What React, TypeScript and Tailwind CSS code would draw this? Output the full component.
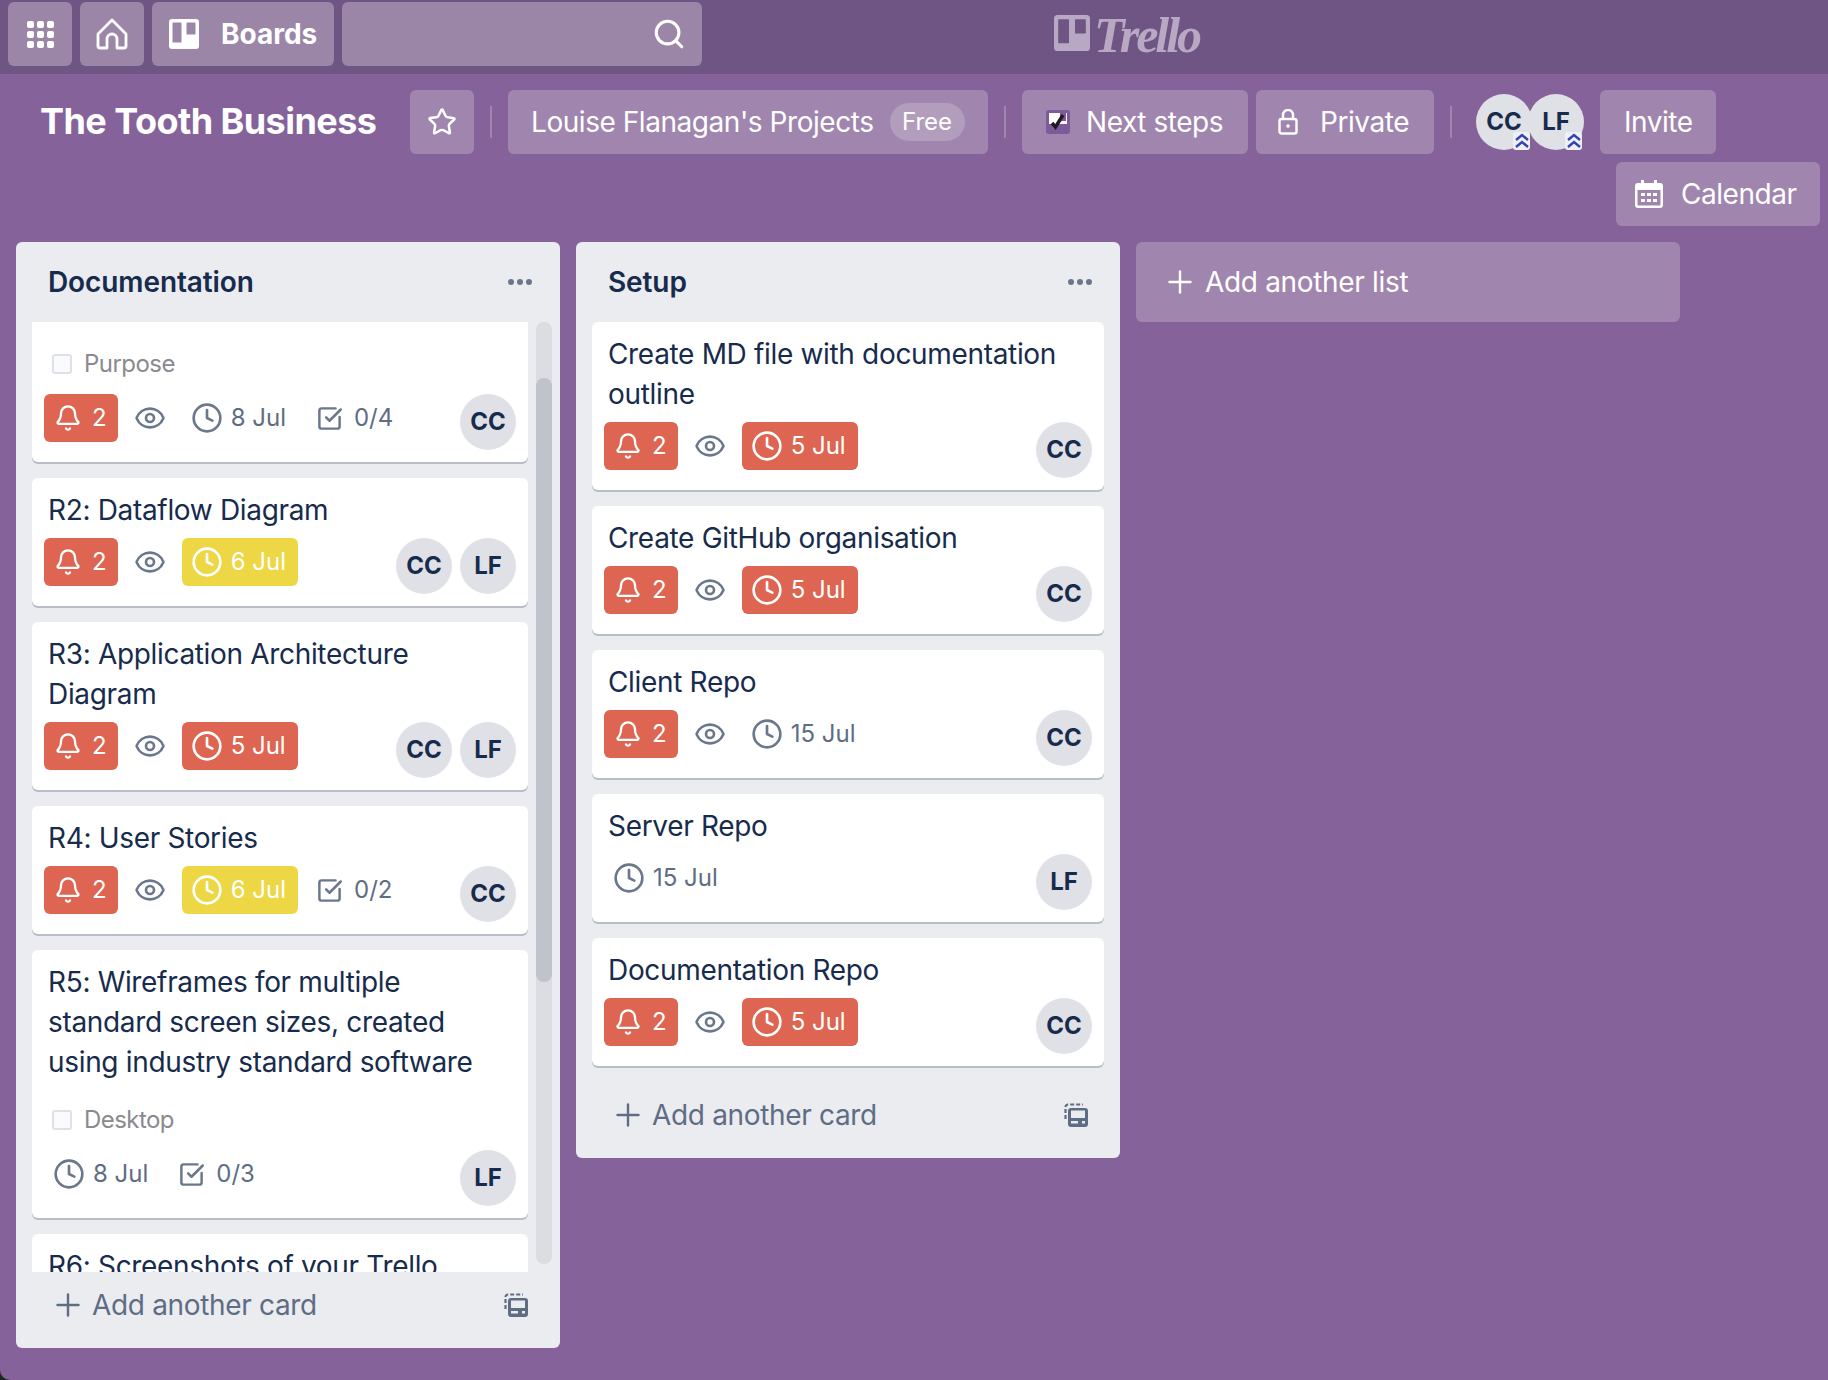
import { Bell, Clock, Eye, Plus, Search, SquareCheckBig, Star } from 'lucide-react';

type Tone = 'red' | 'yellow' | 'plain';

type CardData = {
  title?: string;
  check?: string;
  bell?: boolean;
  date?: string;
  tone?: Tone;
  progress?: string;
  members: string[];
};

const docCards: CardData[] = [
  { check: 'Purpose', bell: true, date: '8 Jul', tone: 'plain', progress: '0/4', members: ['CC'] },
  { title: 'R2: Dataflow Diagram', bell: true, date: '6 Jul', tone: 'yellow', members: ['CC', 'LF'] },
  { title: 'R3: Application Architecture Diagram', bell: true, date: '5 Jul', tone: 'red', members: ['CC', 'LF'] },
  { title: 'R4: User Stories', bell: true, date: '6 Jul', tone: 'yellow', progress: '0/2', members: ['CC'] },
  {
    title: 'R5: Wireframes for multiple standard screen sizes, created using industry standard software',
    check: 'Desktop',
    date: '8 Jul',
    tone: 'plain',
    progress: '0/3',
    members: ['LF'],
  },
  { title: 'R6: Screenshots of your Trello', members: [] },
];

const setupCards: CardData[] = [
  { title: 'Create MD file with documentation outline', bell: true, date: '5 Jul', tone: 'red', members: ['CC'] },
  { title: 'Create GitHub organisation', bell: true, date: '5 Jul', tone: 'red', members: ['CC'] },
  { title: 'Client Repo', bell: true, date: '15 Jul', tone: 'plain', members: ['CC'] },
  { title: 'Server Repo', date: '15 Jul', tone: 'plain', members: ['LF'] },
  { title: 'Documentation Repo', bell: true, date: '5 Jul', tone: 'red', members: ['CC'] },
];

function BoardsIcon({ className }: { className: string }) {
  return (
    <svg viewBox="0 0 30 30" className={className}>
      <path
        fill="currentColor"
        fillRule="evenodd"
        d="M3 0h24a3 3 0 0 1 3 3v24a3 3 0 0 1-3 3H3a3 3 0 0 1-3-3V3a3 3 0 0 1 3-3zM4 3.500a.5.5 0 0 0-.5.5v19a.5.5 0 0 0 .5.5h8a.5.5 0 0 0 .5-.5V4a.5.5 0 0 0-.5-.5zM18 3.500a.5.5 0 0 0-.5.5v11a.5.5 0 0 0 .5.5h8a.5.5 0 0 0 .5-.5V4a.5.5 0 0 0-.5-.5z"
      />
    </svg>
  );
}

function TemplateIcon() {
  return (
    <svg viewBox="0 0 24 24" className="w-6 h-6 text-[#5e6c84]">
      <path
        fill="none"
        stroke="currentColor"
        strokeWidth="2.200"
        strokeDasharray="4 2"
        d="M1.500 16V4a2.500 2.500 0 0 1 2.500-2.500h15"
      />
      <path
        fill="currentColor"
        fillRule="evenodd"
        d="M7 5h14a3 3 0 0 1 3 3v13a3 3 0 0 1-3 3H7a3 3 0 0 1-3-3V8a3 3 0 0 1 3-3zm0 2.500V15h14V7.500zM7 18v2.500h7V18zm11 0v2.500h3V18z"
      />
    </svg>
  );
}

function LockIcon() {
  return (
    <svg viewBox="0 0 20 26" className="w-5 h-[26px]" fill="none" stroke="currentColor" strokeWidth="2.400">
      <path d="M5 10V6a5 5 0 0 1 10 0v4" />
      <rect x="1.500" y="10" width="17" height="14.500" rx="2" />
      <circle cx="10" cy="17" r="1.800" fill="currentColor" stroke="none" />
    </svg>
  );
}

function CalendarIcon() {
  return (
    <svg viewBox="0 0 28 28" className="w-7 h-7">
      <path
        fill="#fff"
        fillRule="evenodd"
        d="M6 0h3v3h10V0h3v3h3a3 3 0 0 1 3 3v19a3 3 0 0 1-3 3H3a3 3 0 0 1-3-3V6a3 3 0 0 1 3-3h3zM2.500 10v14.500a1 1 0 0 0 1 1h21a1 1 0 0 0 1-1V10z"
      />
      <path
        fill="#fff"
        d="M6 13h4v3H6zM12 13h4v3h-4zM18 13h4v3h-4zM6 19h4v3H6zM12 19h4v3h-4zM18 19h4v3h-4z"
      />
    </svg>
  );
}

function Avatar({ name, admin }: { name: string; admin?: boolean }) {
  return (
    <div className="relative w-14 h-14 rounded-full bg-[#dfe1e6] flex items-center justify-center text-[24px] font-bold text-[#172b4d]">
      {name}
      {admin && (
        <div className="absolute right-[2px] bottom-0 w-[17px] h-[18px] bg-[#eff0f4] rounded-[3px] flex items-center justify-center">
          <svg viewBox="0 0 16 18" className="w-4 h-[18px]" fill="none" stroke="#3340b8" strokeWidth="2.400">
            <path d="M2 8l6-5 6 5M2 15l6-5 6 5" />
          </svg>
        </div>
      )}
    </div>
  );
}

function Card({ card, clipped, flush }: { card: CardData; clipped?: boolean; flush?: boolean }) {
  const pill =
    card.tone === 'red' ? 'bg-[#dd6552] text-white' : card.tone === 'yellow' ? 'bg-[#eed744] text-white' : 'text-[#5e6c84]';

  return (
    <div
      className={`shrink-0 bg-white shadow-[0_2px_0_#b9bdc9] ${flush ? 'rounded-b-[6px] pt-1' : 'rounded-[6px] pt-3'} ${
        clipped ? '' : 'pb-3'
      }`}
    >
      {card.title && <div className="px-4 text-[28px] leading-10 tracking-[-0.33px] text-[#172b4d] mb-2">{card.title}</div>}
      {card.check && (
        <div
          className={`flex items-center pl-[20px] pt-5 h-14 text-2xl tracking-[-0.55px] text-[#8a8a8f] mb-3 ${
            card.title ? '-mt-2' : ''
          }`}
        >
          <div className="w-5 h-5 rounded-[3px] border-2 border-[#dfe1e6] bg-[#fafbfc] mr-3" />
          {card.check}
        </div>
      )}
      {!clipped && (
        <div className="flex justify-between items-start px-3">
          <div className="flex gap-2">
            {card.bell && (
              <>
                <div className="h-12 flex items-center pl-2 pr-[11px] rounded-[6px] bg-[#dd6552] text-white text-2xl">
                  <Bell className="w-7 h-7 ml-[2px] mr-[10px]" strokeWidth={2} />2
                </div>
                <div className="h-12 flex items-center px-2 text-[#6b778c]">
                  <Eye className="w-8 h-8" strokeWidth={2} />
                </div>
              </>
            )}
            {card.date && (
              <div className={`h-12 flex items-center pl-[9px] pr-3 rounded-[6px] text-2xl ${pill}`}>
                <Clock className={`w-8 h-8 mr-2 ${card.tone === 'plain' ? 'text-[#6b778c]' : ''}`} strokeWidth={2} />
                {card.date}
              </div>
            )}
            {card.progress && (
              <div className="h-12 flex items-center px-2 text-2xl text-[#5e6c84]">
                <SquareCheckBig className="w-[27px] h-[27px] ml-[2px] mr-[11px] text-[#6b778c]" strokeWidth={2.2} />
                {card.progress}
              </div>
            )}
          </div>
          <div className="flex gap-2">
            {card.members.map((m) => (
              <Avatar key={m} name={m} />
            ))}
          </div>
        </div>
      )}
    </div>
  );
}

function List({ title, cards, scrolling }: { title: string; cards: CardData[]; scrolling?: boolean }) {
  return (
    <div className={`w-[544px] bg-[#ebecf0] rounded-[6px] flex flex-col ${scrolling ? 'h-[1106px]' : ''}`}>
      <div className="h-20 shrink-0 flex items-center justify-between pl-8 pr-[28px]">
        <div className="text-[28px] font-semibold tracking-[-0.1px] text-[#172b4d]">{title}</div>
        <div className="flex gap-[3px]">
          <span className="w-[6px] h-[6px] rounded-full bg-[#6b778c]" />
          <span className="w-[6px] h-[6px] rounded-full bg-[#6b778c]" />
          <span className="w-[6px] h-[6px] rounded-full bg-[#6b778c]" />
        </div>
      </div>
      <div className={`flex ${scrolling ? 'h-[950px] overflow-hidden' : ''}`}>
        <div className={`flex flex-col gap-4 pl-4 ${scrolling ? 'w-[512px]' : 'w-full pr-4 pb-4'}`}>
          {cards.map((c, i) => (
            <Card key={i} card={c} flush={scrolling && i === 0} clipped={scrolling && i === cards.length - 1} />
          ))}
        </div>
        {scrolling && (
          <div className="relative ml-2 w-4 h-[942px] bg-[#dcdde2] rounded-[8px]">
            <div className="absolute left-0 right-0 top-[56px] h-[604px] bg-[#bfc3cc] rounded-[8px]" />
          </div>
        )}
      </div>
      <div className="h-[76px] shrink-0 flex items-center justify-between pl-[42px] pr-8 pb-[11px] text-[#5e6c84]">
        <div className="flex items-center text-[28px] tracking-[-0.33px]">
          <Plus className="w-9 h-9 -ml-2" strokeWidth={1.6} />
          <span className="ml-[6px]">Add another card</span>
        </div>
        <TemplateIcon />
      </div>
    </div>
  );
}

export default function App() {
  const navBtn = 'h-16 rounded-[6px] bg-[#9b86a8] flex items-center justify-center text-white';
  const boardBtn = 'h-16 rounded-[6px] bg-[#a086ae] flex items-center text-white text-[28px] tracking-[-0.45px]';

  return (
    <div className="w-[1828px] h-[1380px] bg-[#1c2a1c]">
      <div className="w-full h-full overflow-hidden rounded-bl-[10px] bg-[#85639a] font-[Inter,sans-serif]">
        <header className="relative h-[74px] bg-[#6f5584] flex gap-2 pl-2 pt-[2px]">
          <div className={`${navBtn} w-16`}>
            <div className="grid grid-cols-3 gap-[3px]">
              {[0, 1, 2, 3, 4, 5, 6, 7, 8].map((i) => (
                <span key={i} className="w-[7px] h-[7px] rounded-[2px] bg-white" />
              ))}
            </div>
          </div>
          <div className={`${navBtn} w-16`}>
            <svg viewBox="0 0 32 32" className="w-8 h-8" fill="none" stroke="currentColor" strokeWidth="2.800" strokeLinejoin="round">
              <path d="M16 2L2 16v12a2 2 0 0 0 2 2h7V21a5 5 0 0 1 10 0v9h7a2 2 0 0 0 2-2V16z" />
            </svg>
          </div>
          <div className={`${navBtn} w-[182px] !justify-start pl-[17px] text-[28px] font-bold`}>
            <BoardsIcon className="w-[30px] h-[30px] mr-[22px]" />
            Boards
          </div>
          <div className={`${navBtn} w-[360px] !justify-end pr-4`}>
            <Search className="w-[34px] h-[34px]" strokeWidth={2.2} />
          </div>
          <div className="absolute left-[1054px] top-[15px] flex items-start text-[#b8a8c4]">
            <BoardsIcon className="w-[36px] h-[36px] mr-[4px]" />
            <span className="text-[50px] leading-[40px] italic font-bold font-['Liberation_Serif',serif] tracking-[-3px]">Trello</span>
          </div>
        </header>

        <div className="flex items-center h-16 mt-4 pl-10">
          <h1 className="text-[36px] font-bold text-white tracking-[-0.55px] w-[370px] -mt-[2px]">The Tooth Business</h1>
          <div className={`${boardBtn} w-16 justify-center`}>
            <Star className="w-[30px] h-[30px]" strokeWidth={2} />
          </div>
          <div className="w-[2px] h-8 bg-[#9f86ad] mx-4" />
          <div className={`${boardBtn} w-[480px] pl-[23px]`}>
            Louise Flanagan's Projects
            <span className="ml-[16px] h-[38px] w-[75px] justify-center rounded-full bg-[#b29dbd] text-2xl flex items-center tracking-normal">Free</span>
          </div>
          <div className="w-[2px] h-8 bg-[#9f86ad] mx-4" />
          <div className={`${boardBtn} w-[226px] pl-6`}>
            <svg viewBox="0 0 24 24" className="w-6 h-6 mr-[16px]">
              <rect width="24" height="24" rx="3" fill="#7f5a9b" />
              <path d="M3 3h18v11H3z" fill="#fff" />
              <path d="M14 3h6v8h-6z" fill="#7f5a9b" />
              <path d="M6 13l3.500 4L17 5" fill="none" stroke="#1f1a26" strokeWidth="3.500" />
            </svg>
            Next steps
          </div>
          <div className={`${boardBtn} w-[178px] ml-2 pl-[22px]`}>
            <span className="mr-[22px] flex">
              <LockIcon />
            </span>
            Private
          </div>
          <div className="w-[2px] h-8 bg-[#9f86ad] mx-4" />
          <div className="flex ml-[8px]">
            <Avatar name="CC" admin />
            <div className="-ml-[4px]">
              <Avatar name="LF" admin />
            </div>
          </div>
          <div className={`${boardBtn} w-[116px] ml-4 pl-6`}>Invite</div>
        </div>

        <div className="flex justify-end mt-2 pr-2">
          <div className={`${boardBtn} w-[204px] pl-[19px]`}>
            <span className="mr-[18px] flex">
              <CalendarIcon />
            </span>
            Calendar
          </div>
        </div>

        <div className="flex items-start gap-4 pl-4 mt-4">
          <List title="Documentation" cards={docCards} scrolling />
          <List title="Setup" cards={setupCards} />
          <div className="w-[544px] h-20 rounded-[6px] bg-[#a086ae] flex items-center pl-[26px] text-[28px] tracking-[-0.33px] text-white">
            <Plus className="w-9 h-9 mr-[7px]" strokeWidth={1.6} />
            Add another list
          </div>
        </div>
      </div>
    </div>
  );
}
